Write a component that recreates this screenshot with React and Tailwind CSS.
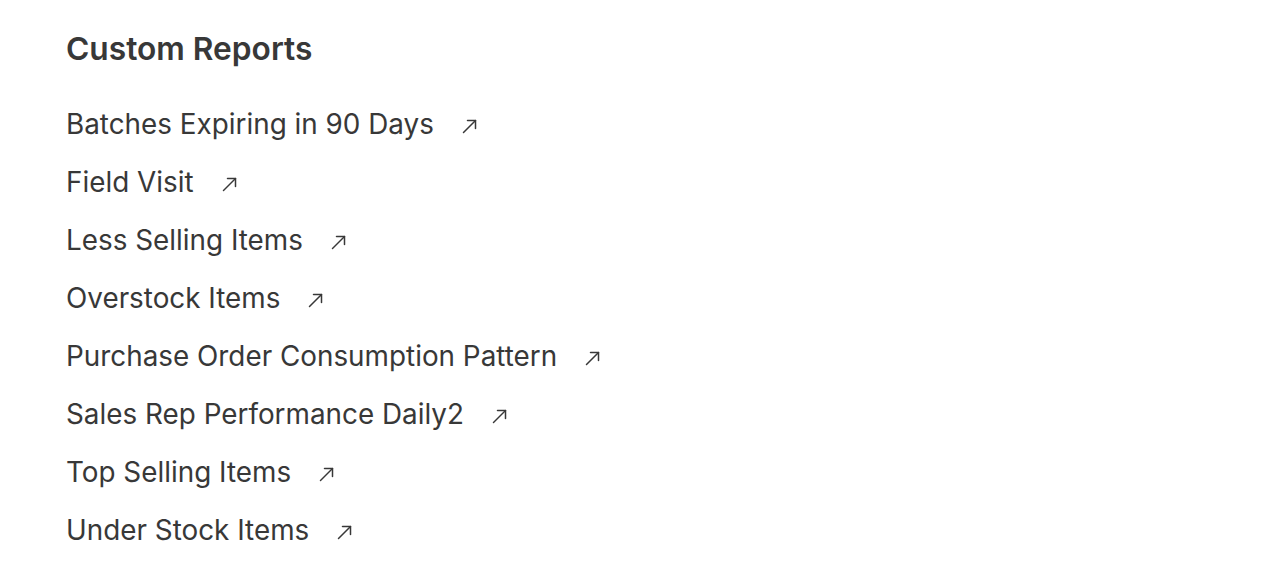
import React from 'react';

const reports = [
  'Batches Expiring in 90 Days',
  'Field Visit',
  'Less Selling Items',
  'Overstock Items',
  'Purchase Order Consumption Pattern',
  'Sales Rep Performance Daily2',
  'Top Selling Items',
  'Under Stock Items',
];

function ArrowIcon() {
  return (
    <svg className="w-[15px] h-[15px] mt-[4px] text-[#383838]" viewBox="0 0 15 15" fill="none" stroke="currentColor" strokeWidth={1.5} strokeLinecap="round" strokeLinejoin="round">
      <path d="M1.5 13.5l12-12" />
      <path d="M5.5 1.5h8v8" />
    </svg>
  );
}

export default function App() {
  return (
    <div className="min-h-screen bg-white px-[66px] pt-[29px]" style={{ fontFamily: 'Inter, "Noto Sans", sans-serif' }}>
      <h2 className="text-[31.7px] font-semibold text-[#383838] leading-[40px]">Custom Reports</h2>
      <div className="mt-[37px] flex flex-col gap-[22px]">
        {reports.map((r) => (
          <a key={r} href="#" className="flex items-center gap-[28px] text-[27.85px] leading-[36px] text-[#383838]">
            <span>{r}</span>
            <ArrowIcon />
          </a>
        ))}
      </div>
    </div>
  );
}
